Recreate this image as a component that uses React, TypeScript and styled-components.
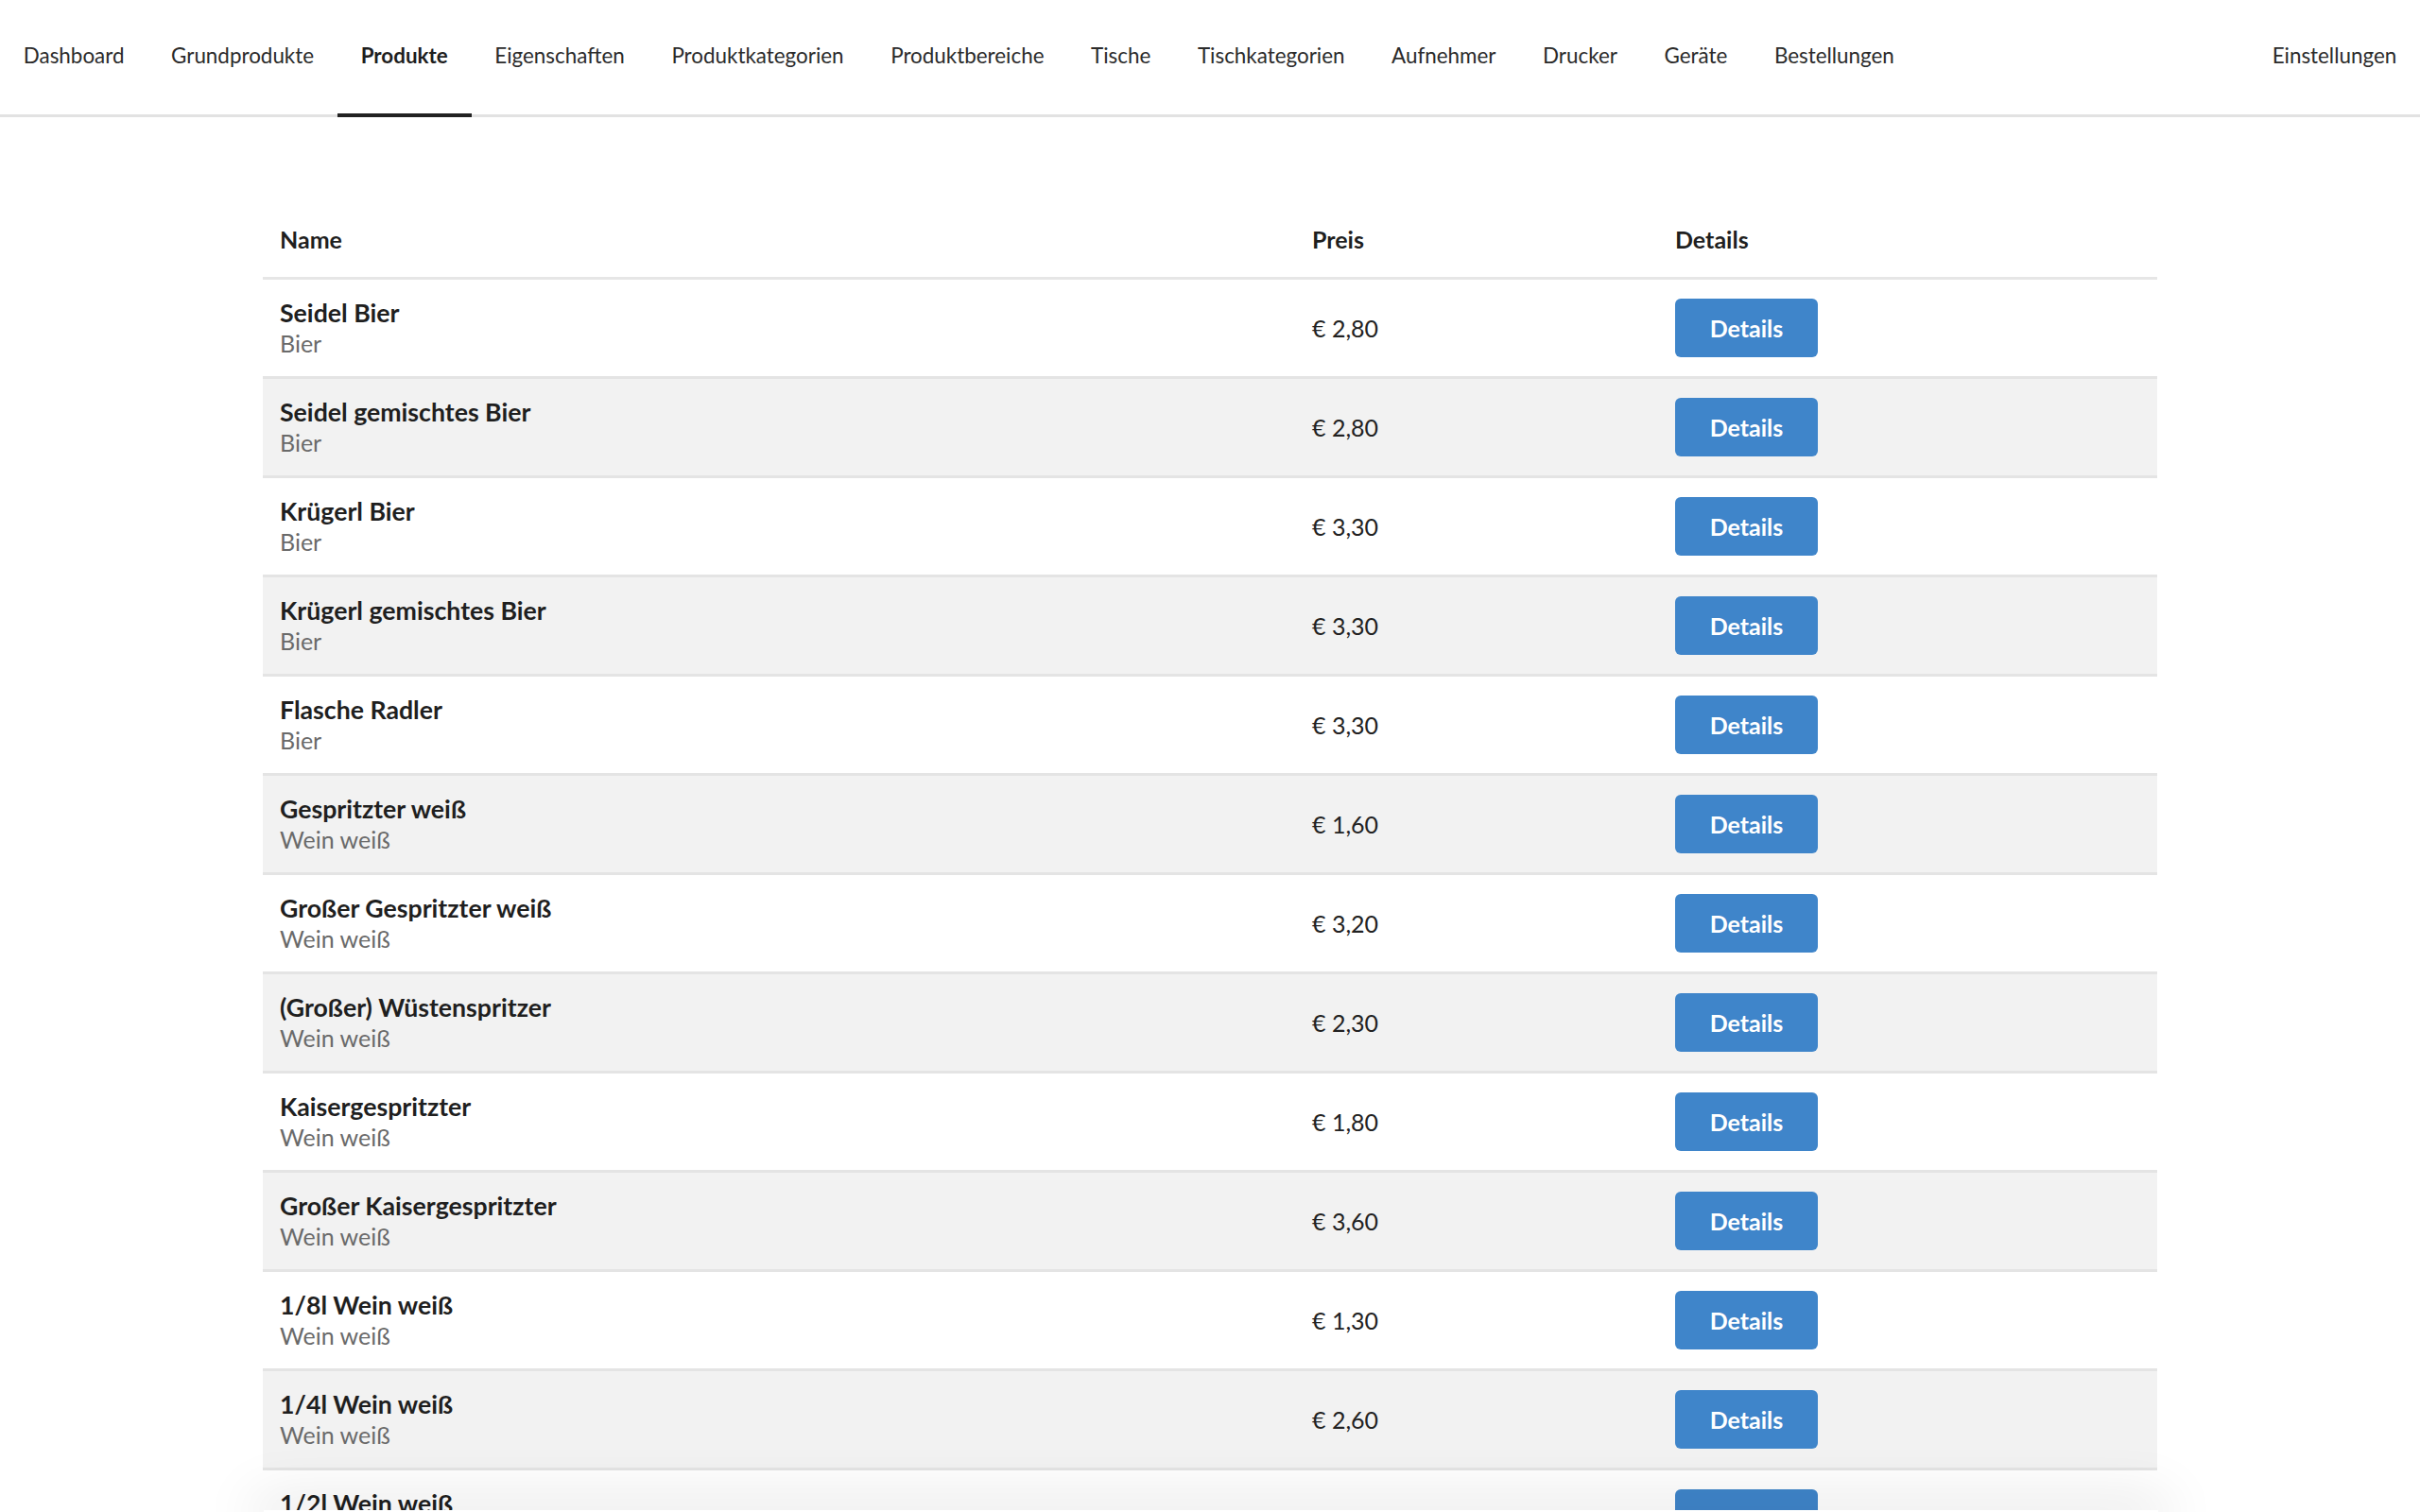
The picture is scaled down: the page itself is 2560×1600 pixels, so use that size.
import styled, { createGlobalStyle, css } from "styled-components"

const GlobalStyle = createGlobalStyle`
    * {
        box-sizing: border-box;
    }

    body {
        margin: 0;
        background: #fff;
        font-family: Lato, "Open Sans", "Liberation Sans", sans-serif;
        color: #222;
    }
`

const NavBar = styled.nav`
    display: flex;
    align-items: stretch;
    height: 124px;
    border-bottom: 3px solid #e2e2e2;
    background: #fff;
`

const NavItem = styled.a<{ $active?: boolean }>`
    display: flex;
    align-items: center;
    padding: 0 24.8px 3px;
    margin-bottom: -3px;
    font-size: 22.4px;
    color: #2b2b2b;
    text-decoration: none;
    border-bottom: 4px solid transparent;
    cursor: pointer;

    ${({ $active }) => $active && css`
        font-weight: 700;
        color: #1e1e1e;
        border-bottom-color: #222;
    `}
`

const Spacer = styled.div`
    flex: 1;
`

const Main = styled.main`
    padding: 95px 0 0;
    display: flex;
    justify-content: center;
`

const Table = styled.table`
    width: 2004px;
    border-collapse: collapse;
    table-layout: fixed;
    font-size: 25px;
    line-height: 32px;

    col.name { width: 1092px; }
    col.price { width: 384px; }
`

const HeadCell = styled.th`
    text-align: left;
    font-weight: 700;
    padding: 18px 18px 24px;
    color: #1f1f1f;
    border-bottom: 3px solid #e6e6e6;
`

const Row = styled.tr<{ $striped: boolean }>`
    background: ${({ $striped }) => ($striped ? "#f2f2f2" : "#fff")};
    border-bottom: 3px solid #e4e4e4;
`

const Cell = styled.td`
    padding: 19px 18px;
    vertical-align: middle;
    color: #222;
`

const ProductName = styled.div`
    font-size: 26.7px;
    font-weight: 700;
    color: #1f1f1f;
`

const ProductCategory = styled.div`
    color: #6a6a6a;
`

const DetailsButton = styled.button`
    width: 151px;
    height: 62px;
    border: none;
    border-radius: 6px;
    background: #3f85ca;
    color: #fff;
    font-family: inherit;
    font-size: 25px;
    font-weight: 700;
    cursor: pointer;
    display: block;
`

const BottomBar = styled.div`
    position: fixed;
    left: 279px;
    right: 277px;
    bottom: -4px;
    height: 6px;
    background: #fff;
    box-shadow: 0 0 60px 10px rgba(0, 0, 0, 0.14);
`

const navItems = [
    "Dashboard",
    "Grundprodukte",
    "Produkte",
    "Eigenschaften",
    "Produktkategorien",
    "Produktbereiche",
    "Tische",
    "Tischkategorien",
    "Aufnehmer",
    "Drucker",
    "Geräte",
    "Bestellungen",
]

const products = [
    { name: "Seidel Bier", category: "Bier", price: "€ 2,80" },
    { name: "Seidel gemischtes Bier", category: "Bier", price: "€ 2,80" },
    { name: "Krügerl Bier", category: "Bier", price: "€ 3,30" },
    { name: "Krügerl gemischtes Bier", category: "Bier", price: "€ 3,30" },
    { name: "Flasche Radler", category: "Bier", price: "€ 3,30" },
    { name: "Gespritzter weiß", category: "Wein weiß", price: "€ 1,60" },
    { name: "Großer Gespritzter weiß", category: "Wein weiß", price: "€ 3,20" },
    { name: "(Großer) Wüstenspritzer", category: "Wein weiß", price: "€ 2,30" },
    { name: "Kaisergespritzter", category: "Wein weiß", price: "€ 1,80" },
    { name: "Großer Kaisergespritzter", category: "Wein weiß", price: "€ 3,60" },
    { name: "1/8l Wein weiß", category: "Wein weiß", price: "€ 1,30" },
    { name: "1/4l Wein weiß", category: "Wein weiß", price: "€ 2,60" },
    { name: "1/2l Wein weiß", category: "Wein weiß", price: "€ 5,20" },
    { name: "Gespritzter rot", category: "Wein rot", price: "€ 1,60" },
    { name: "1/8l Wein rot", category: "Wein rot", price: "€ 1,30" },
]

export default function App() {
    return (
        <>
            <GlobalStyle />
            <NavBar>
                {navItems.map(item => (
                    <NavItem key={item} $active={item === "Produkte"}>{item}</NavItem>
                ))}
                <Spacer />
                <NavItem>Einstellungen</NavItem>
            </NavBar>

            <Main>
                <Table>
                    <colgroup>
                        <col className="name" />
                        <col className="price" />
                        <col />
                    </colgroup>
                    <thead>
                        <tr>
                            <HeadCell>Name</HeadCell>
                            <HeadCell>Preis</HeadCell>
                            <HeadCell>Details</HeadCell>
                        </tr>
                    </thead>
                    <tbody>
                        {products.map((product, i) => (
                            <Row key={product.name} $striped={i % 2 === 1}>
                                <Cell>
                                    <ProductName>{product.name}</ProductName>
                                    <ProductCategory>{product.category}</ProductCategory>
                                </Cell>
                                <Cell>{product.price}</Cell>
                                <Cell>
                                    <DetailsButton>Details</DetailsButton>
                                </Cell>
                            </Row>
                        ))}
                    </tbody>
                </Table>
            </Main>

            <BottomBar />
        </>
    )
}
